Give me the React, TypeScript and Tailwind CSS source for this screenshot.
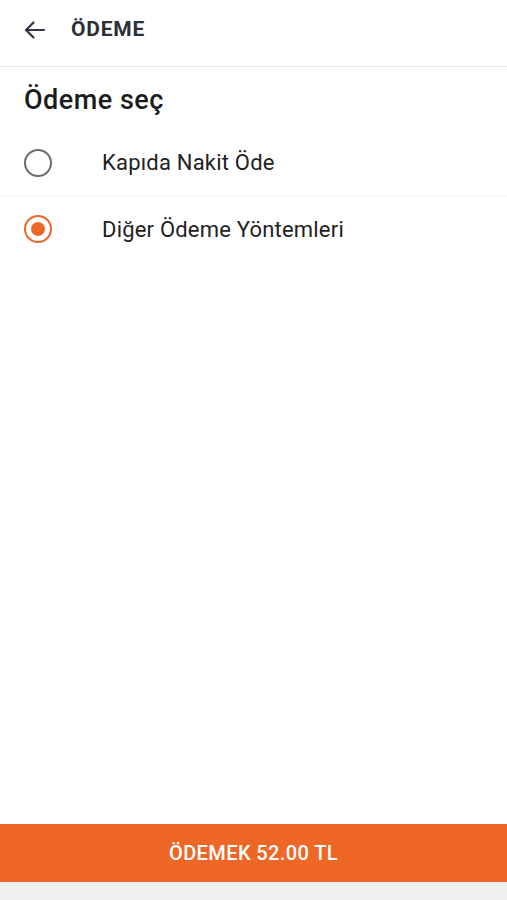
import React from "react";

export default function App() {
  return (
    <div className="h-[900px] w-full flex flex-col bg-white" style={{ fontFamily: "Roboto, 'Noto Sans', sans-serif" }}>
      <div className="h-[67px] pb-[6px] flex items-center border-b border-[#e8e8e8] box-border">
        <div className="w-[71px] pl-[23px] flex items-center">
          <svg width="24" height="24" viewBox="0 0 24 24" fill="none" stroke="#2f3542" strokeWidth="2.2" strokeLinecap="round" strokeLinejoin="round">
            <path d="M21 12H3.5" />
            <path d="M10.5 4.5L3 12l7.5 7.5" />
          </svg>
        </div>
        <span className="text-[21px] font-bold text-[#2b2f36] tracking-[0.8px]">ÖDEME</span>
      </div>
      <div className="h-[63px] pt-[3px] flex items-center px-[24px]">
        <span className="text-[27px] font-medium text-[#1c1c1c] tracking-[0.5px]">Ödeme seç</span>
      </div>
      <div className="h-[66px] flex items-center border-b border-[#f6f6f6]">
        <div className="w-[102px] pl-[24px] flex items-center">
          <div className="w-[28px] h-[28px] rounded-full border-[2.5px] border-[#6b6b6b]" />
        </div>
        <span className="text-[22px] text-[#222] tracking-[0.2px]">Kapıda Nakit Öde</span>
      </div>
      <div className="h-[66px] flex items-center">
        <div className="w-[102px] pl-[24px] flex items-center">
          <div className="w-[28px] h-[28px] rounded-full border-[2.5px] border-[#ee6727] flex items-center justify-center">
            <div className="w-[14px] h-[14px] rounded-full bg-[#ee6727]" />
          </div>
        </div>
        <span className="text-[22px] text-[#222] tracking-[0.2px]">Diğer Ödeme Yöntemleri</span>
      </div>
      <div className="flex-1" />
      <div className="h-[58px] bg-[#ee6727] flex items-center justify-center">
        <span className="text-[20px] font-medium text-white tracking-[0.4px]">ÖDEMEK 52.00 TL</span>
      </div>
      <div className="h-[18px] bg-[#f0f0f0]" />
    </div>
  );
}
